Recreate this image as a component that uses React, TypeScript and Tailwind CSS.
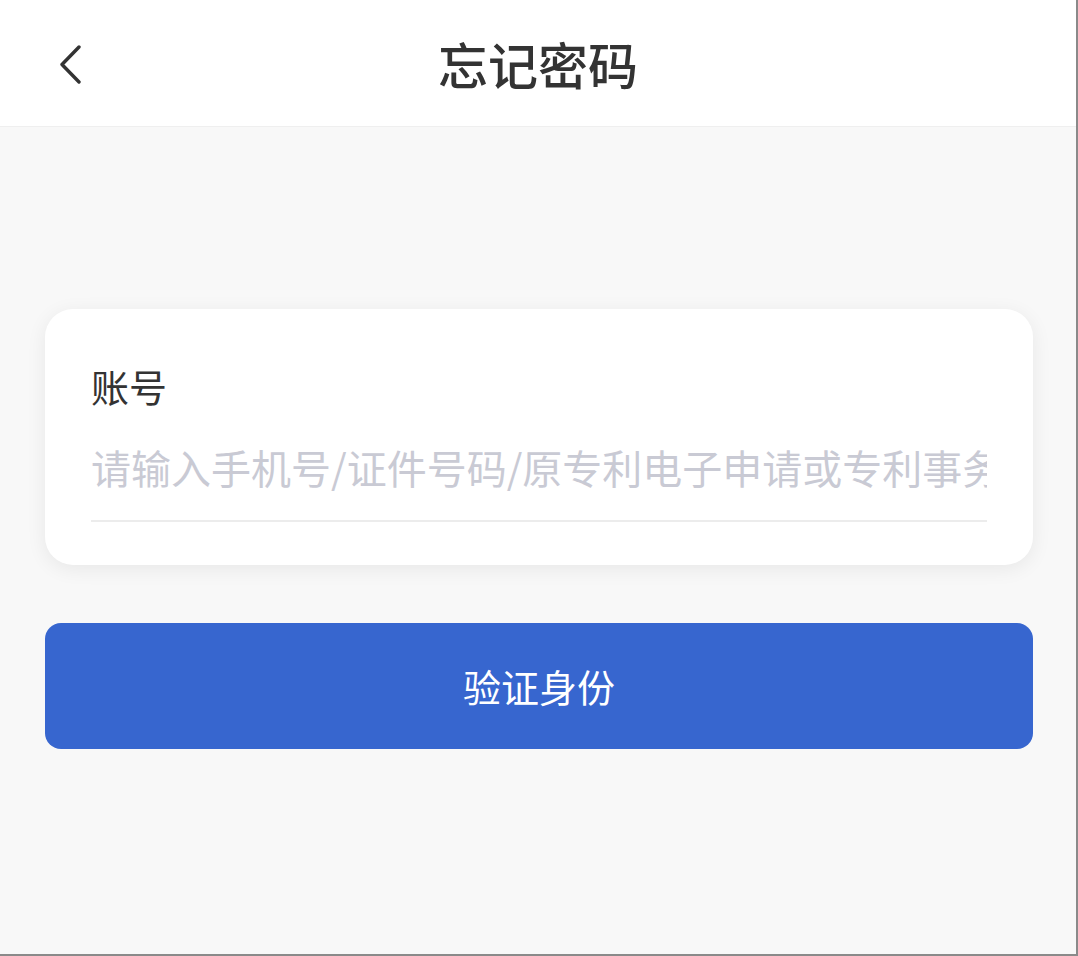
import React from "react";

const App = () => {
  return (
    <div
      className="w-[1078px] h-[956px] bg-[#f8f8f8] flex flex-col border-r-2 border-b-2 border-[#8a8a8a] overflow-hidden"
      style={{ fontFamily: '"Noto Sans CJK SC", "Noto Sans", sans-serif' }}
    >
      {/* header */}
      <div className="h-[127px] bg-white border-b border-[#efefef] flex items-center relative shrink-0">
        <button className="absolute left-[48px] top-[38px] w-[44px] h-[52px] flex items-center justify-center">
          <svg width="30" height="40" viewBox="0 0 30 40" fill="none">
            <path d="M24 3 L7 20.5 L24 38" stroke="#333" strokeWidth="3.4" strokeLinecap="round" strokeLinejoin="round" />
          </svg>
        </button>
        <h1 className="w-full text-center text-[50px] leading-none text-[#333] font-medium">忘记密码</h1>
      </div>

      <div className="pl-[45px] pr-[43px] pt-[182px] flex flex-col">
        {/* account card */}
        <div className="bg-white rounded-[28px] shadow-[0_4px_20px_rgba(0,0,0,0.07)] h-[256px] px-[46px] pt-[58px]">
          <div className="text-[38px] leading-none text-[#333]">账号</div>
          <div className="mt-[33px] border-b-2 border-[#ececec] h-[84px]">
            <input
              className="w-full bg-transparent outline-none text-[40px] leading-none text-[#333] placeholder:text-[#c9cad4]"
              placeholder="请输入手机号/证件号码/原专利电子申请或专利事务所代码"
            />
          </div>
        </div>

        {/* button */}
        <button className="mt-[58px] h-[126px] rounded-[16px] bg-[#3766cf] text-white text-[38px] leading-none flex items-center justify-center">
          验证身份
        </button>
      </div>
    </div>
  );
};

export default App;
